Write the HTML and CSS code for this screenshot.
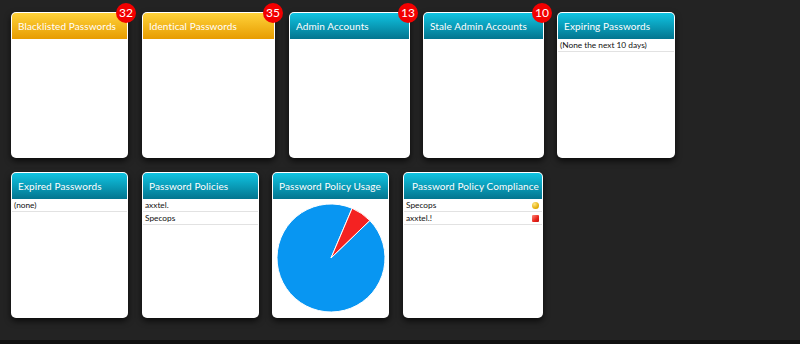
FILE: index.html
```html
<!DOCTYPE html>
<html lang="en">
<head>
<meta charset="UTF-8">
<title>Password Dashboard</title>
<link rel="stylesheet" href="styles.css">
</head>
<body>
<div class="board">
    <div class="row">
        <div class="tile tile-w117 warn">
            <div class="tile-head">Blacklisted Passwords</div>
            <div class="tile-body"></div>
            <span class="badge">32</span>
        </div>
        <div class="tile tile-w133 warn">
            <div class="tile-head">Identical Passwords</div>
            <div class="tile-body"></div>
            <span class="badge">35</span>
        </div>
        <div class="tile tile-w121">
            <div class="tile-head">Admin Accounts</div>
            <div class="tile-body"></div>
            <span class="badge">13</span>
        </div>
        <div class="tile tile-w121 tile-tight">
            <div class="tile-head">Stale Admin Accounts</div>
            <div class="tile-body"></div>
            <span class="badge">10</span>
        </div>
        <div class="tile tile-w118 tile-tight">
            <div class="tile-head">Expiring Passwords</div>
            <div class="tile-body">
                <div class="item">(None the next 10 days)</div>
            </div>
        </div>
    </div>
    <div class="row">
        <div class="tile tile-w117">
            <div class="tile-head">Expired Passwords</div>
            <div class="tile-body">
                <div class="item">(none)</div>
            </div>
        </div>
        <div class="tile tile-w117">
            <div class="tile-head">Password Policies</div>
            <div class="tile-body">
                <div class="item">axxtel.</div>
                <div class="item">Specops</div>
            </div>
        </div>
        <div class="tile tile-w117 tile-tight">
            <div class="tile-head">Password Policy Usage</div>
            <div class="tile-body chart">
                <svg width="110" height="110" viewBox="0 0 110 110">
                    <path d="M55 55 L93.84 17.49 A54 54 0 1 1 76.1 5.29 Z" fill="#0896f2" stroke="#fff" stroke-width="1"/>
                    <path d="M55 55 L76.1 5.29 A54 54 0 0 1 93.84 17.49 Z" fill="#f42222" stroke="#fff" stroke-width="1"/>
                </svg>
            </div>
        </div>
        <div class="tile tile-w140">
            <div class="tile-head tile-head-wide">Password Policy Compliance</div>
            <div class="tile-body">
                <div class="item">Specops <span class="dot dot-yellow"></span></div>
                <div class="item">axxtel.! <span class="dot dot-red"></span></div>
            </div>
        </div>
    </div>
</div>
<div class="footer-bar"></div>
</body>
</html>
```

FILE: styles.css
```css
html, body {
    margin: 0;
    height: 100%;
}
body {
    font-family: 'Lato', 'Open Sans', sans-serif;
    background-color: #232323;
    display: flex;
    flex-direction: column;
    overflow: hidden;
}
.board {
    flex: 1;
    padding: 12px 0 0 11px;
    display: flex;
    flex-direction: column;
    gap: 14px;
}
.row {
    display: flex;
    gap: 14px;
}
.footer-bar {
    height: 4px;
    background-color: #111;
}

/* tiles */
.tile {
    position: relative;
    height: 146px;
    box-sizing: border-box;
    padding: 1px;
    background-color: #fff;
    border-radius: 5px;
    box-shadow: 0 3px 6px rgba(0, 0, 0, 0.7);
    display: flex;
    flex-direction: column;
}
.tile-tight { margin-left: -1px; }
.tile-w117 { width: 117px; }
.tile-w118 { width: 118px; }
.tile-w121 { width: 121px; }
.tile-w133 { width: 133px; }
.tile-w140 { width: 140px; }

.tile-head {
    height: 26px;
    line-height: 27px;
    padding-left: 6px;
    border-radius: 4px 4px 0 0;
    color: #fff;
    font-size: 10px;
    letter-spacing: 0.1px;
    white-space: nowrap;
    background: linear-gradient(#10c4e2, #03758f);
}
.tile-head-wide {
    padding-left: 8px;
}
.warn .tile-head {
    background: linear-gradient(#ffd23a, #e79c00);
}
.tile-body {
    flex: 1;
}
.chart {
    display: flex;
    align-items: center;
    justify-content: center;
}
.item {
    height: 12px;
    line-height: 12px;
    padding: 0 2px;
    font-size: 8.3px;
    color: #111;
    border-bottom: 1px solid #e2e2e2;
    display: flex;
    justify-content: space-between;
    align-items: center;
    white-space: nowrap;
}
.dot {
    width: 7px;
    height: 7px;
    margin-right: 1px;
}
.dot-yellow {
    border-radius: 50%;
    background: radial-gradient(circle at 35% 30%, #ffe680, #e0a800 70%, #b88400);
}
.dot-red {
    border-radius: 1px;
    background: linear-gradient(135deg, #ff8a7a, #e8231b 60%, #c41410);
}

.badge {
    position: absolute;
    top: -9px;
    right: -8px;
    width: 20px;
    height: 20px;
    border-radius: 50%;
    background-color: #f20000;
    color: #fff;
    font-size: 12px;
    line-height: 20px;
    text-align: center;
}
```
